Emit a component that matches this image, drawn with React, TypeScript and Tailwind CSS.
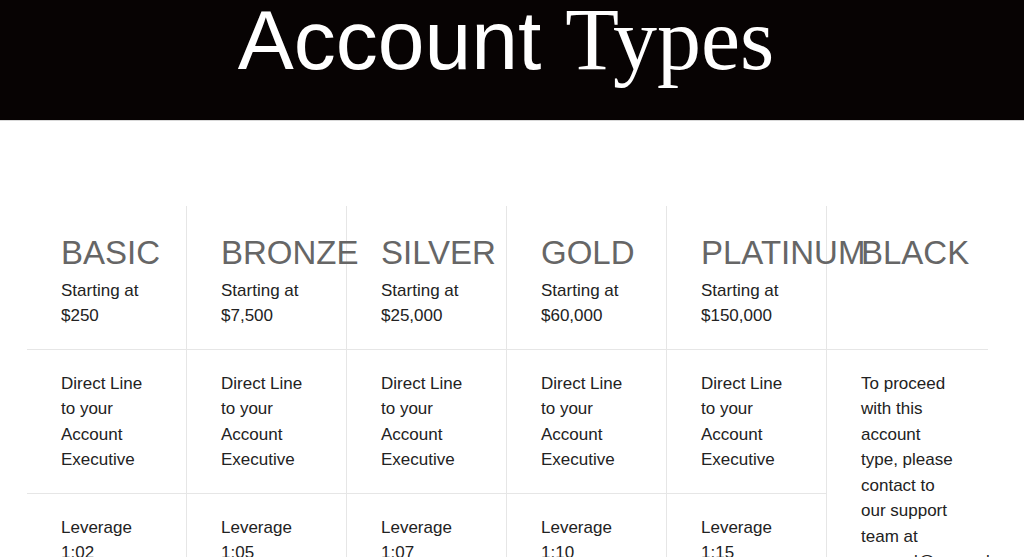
import React from 'react';

const tiers = [
  { name: 'BASIC', price: '$250', leverage: '1:02' },
  { name: 'BRONZE', price: '$7,500', leverage: '1:05' },
  { name: 'SILVER', price: '$25,000', leverage: '1:07' },
  { name: 'GOLD', price: '$60,000', leverage: '1:10' },
  { name: 'PLATINUM', price: '$150,000', leverage: '1:15' },
];

export default function App() {
  return (
    <div className="min-h-screen bg-white text-[#222]" style={{ fontFamily: '"Liberation Sans", Arial, sans-serif' }}>
      <header className="flex justify-center h-[121px] bg-[#070303] border-b border-[#d9d9d9] pr-[12px]">
        <h1 className="-mt-[2px] flex text-[84px] leading-[84px] text-white whitespace-nowrap">
          <span>Account</span>
          <span className="ml-[24px] text-[88px]" style={{ fontFamily: '"Liberation Serif", "Times New Roman", serif' }}>Types</span>
        </h1>
      </header>

      <div className="ml-[27px] mt-[85px] w-[961px] grid grid-cols-[160px_160px_160px_160px_160px_161px] text-[17px] leading-[25.5px]">
        {tiers.map((t) => (
          <div key={t.name} className="border-r border-b border-[#e6e6e6] pl-[34px] pr-[30px] py-[20.5px]">
            <h2 className="text-[33px] leading-[51px] text-[#666] whitespace-nowrap">{t.name}</h2>
            <p>Starting at</p>
            <p>{t.price}</p>
          </div>
        ))}
        <div className="border-b border-[#e6e6e6] pl-[34px] pr-[30px] py-[20.5px]">
          <h2 className="text-[33px] leading-[51px] text-[#666] whitespace-nowrap">BLACK</h2>
        </div>

        {tiers.map((t) => (
          <div key={t.name + '-line'} className="border-r border-b border-[#e6e6e6] pl-[34px] pr-[30px] py-[20.5px]">
            <p>Direct Line to your Account Executive</p>
          </div>
        ))}
        <div className="row-span-3 pl-[34px] pr-[30px] py-[20.5px]">
          <p>
            To proceed with this account type, please contact to our support team at{' '}
            <span className="whitespace-nowrap">general@example.com</span>
          </p>
        </div>

        {tiers.map((t) => (
          <div key={t.name + '-lev'} className="border-r border-b border-[#e6e6e6] pl-[34px] pr-[30px] py-[20.5px]">
            <p>Leverage</p>
            <p>{t.leverage}</p>
          </div>
        ))}

        {tiers.map((t) => (
          <div key={t.name + '-sup'} className="border-r border-[#e6e6e6] pl-[34px] pr-[30px] py-[20.5px]">
            <p>24/7 Support</p>
          </div>
        ))}
      </div>
    </div>
  );
}
